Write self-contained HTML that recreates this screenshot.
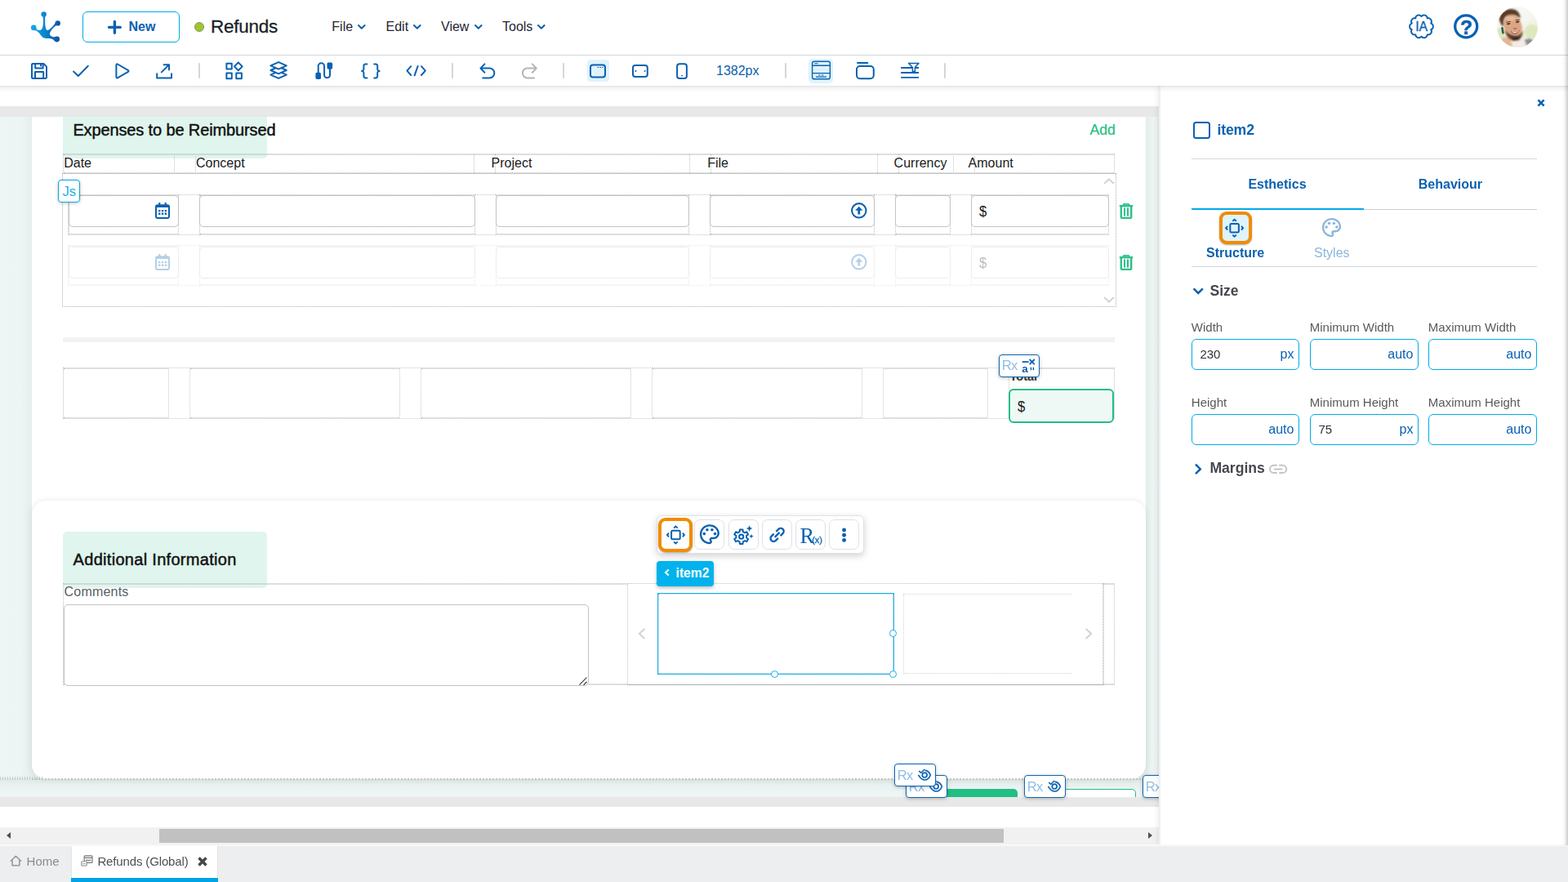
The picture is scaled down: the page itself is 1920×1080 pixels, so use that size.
<!DOCTYPE html>
<html lang="en">
<head>
<meta charset="utf-8">
<title>Refunds</title>
<style>
*{box-sizing:border-box;margin:0;padding:0}
html,body{width:1920px;height:1080px;overflow:hidden;background:#fff}
body{font-family:"Liberation Sans",sans-serif;font-size:16px;color:#222;position:relative}
.a{position:absolute}
.t{position:absolute;white-space:nowrap;line-height:1}
svg{position:absolute;overflow:visible}
.ic{fill:none;stroke:#0a61b1;stroke-width:2;stroke-linecap:round;stroke-linejoin:round}
.icg{fill:none;stroke:#b4b4b4;stroke-width:2;stroke-linecap:round;stroke-linejoin:round}
.fb{fill:#0a61b1}
#hdr{z-index:5;left:0;top:0;width:1920px;height:68px;background:#fff;border-bottom:1px solid #d3d6db}
#tb{z-index:4;left:0;top:68px;width:1920px;height:37px;background:#fff}
#tbs{z-index:4;left:0;top:105px;width:1920px;height:8px;background:linear-gradient(180deg,rgba(0,0,0,.105) 0,rgba(0,0,0,.06) 2px,rgba(0,0,0,.025) 4.5px,rgba(0,0,0,0) 8px)}
#top{z-index:6;left:0;top:0;width:1920px;height:106px}
.sep{position:absolute;top:77px;width:2px;height:19px;background:#d3d6db;border-radius:1px}
.hl{position:absolute;background:#dff3fb}
#ws{left:0;top:0;width:1419px;height:1035px;background:#fff;overflow:hidden}
.gbar{position:absolute;left:0;width:1420px;background:#e8e8e8}
#form{left:0;top:143px;width:1420px;height:833px;background:#eef6f5;overflow:hidden}
#form .card{margin-top:-143px}
.card{position:absolute;background:#fff}
.d{position:absolute;border:1px dotted #bbbec2}
.d2{position:absolute;border:1px dotted #c6c9cc}
.dh{position:absolute;height:0;border-top:1px dotted #bbbec2}
.dv{position:absolute;width:0;border-left:1px dotted #bfc2c6}
.inp{position:absolute;border:1px solid #c2c2c2;border-radius:5px;background:#fff}
.ttl{position:absolute;background:#dff5ed}
.rx{position:absolute;border:1px solid #0f66b4;border-radius:4px;background:#fff;box-shadow:0 1px 4px rgba(0,0,0,.25)}
.fbtn{position:absolute;width:37px;height:37px;border:1px solid #dfe1e4;border-radius:7px;background:#fff}
#pn{z-index:3;left:1419px;top:105px;width:501px;height:930px;background:#fff;border-left:2px solid #eff0f0;box-shadow:-2px 0 6px rgba(0,0,0,.07)}
.pin{position:absolute;border:1px solid #00a9e8;border-radius:6px;background:#fff;width:132px;height:38px}
#bt{z-index:7;left:0;top:1034px;width:1920px;height:46px;background:#edeef0;border-top:1px solid #dcdde0}
</style>
</head>
<body>
<div id="ws" class="a">
<div id="form" class="a">
<div class="a" style="left:0;top:0;width:1420px;height:833px;background:linear-gradient(90deg,#eef6f5 0,#edf5f4 26px,#e5eeed 38px,#e5eeed 1404px,#ecf4f3 1411px,#edf4f3 1416px,#e6eded 1419px)"></div>
<div class="a" style="left:0;top:810px;width:1420px;height:23px;background:linear-gradient(180deg,#dde8e7 0,#e8f1f0 8px,#eef6f5 18px)"></div>
<div class="card" style="left:39px;top:143px;width:1364px;height:490px"></div>
<div class="card" style="left:39px;top:613px;width:1364px;height:340.5px;border-radius:18px;box-shadow:0 0 9px rgba(0,0,0,.09)"></div>
</div>
<div class="gbar" style="top:130px;height:13px"></div>
<div class="a" style="left:77px;top:143px;width:250px;height:51px;background:#dff5ed;border-radius:0 0 5px 5px"></div>
<span class="t" style="top:149px;font-size:20px;color:#111;left:89.40px;letter-spacing:-0.13px;-webkit-text-stroke:.45px #111;">Expenses to be Reimbursed</span>
<span class="t" style="top:151px;font-size:17.6px;color:#21bf83;left:1334.40px;-webkit-text-stroke:.2px #21bf83;">Add</span>
<div class="d" style="left:77px;top:188px;width:1288px;height:25px;"></div>
<div class="dh" style="left:78px;top:189px;width:1286px"></div>
<div class="dh" style="left:78px;top:211px;width:1286px"></div>
<div class="dv" style="left:213px;top:189px;height:23px"></div>
<div class="dv" style="left:239px;top:189px;height:23px"></div>
<div class="dv" style="left:580px;top:189px;height:23px"></div>
<div class="dv" style="left:606px;top:189px;height:23px"></div>
<div class="dv" style="left:844px;top:189px;height:23px"></div>
<div class="dv" style="left:870px;top:189px;height:23px"></div>
<div class="dv" style="left:1074px;top:189px;height:23px"></div>
<div class="dv" style="left:1100px;top:189px;height:23px"></div>
<div class="dv" style="left:1167px;top:189px;height:23px"></div>
<div class="dv" style="left:1193px;top:189px;height:23px"></div>
<span class="t" style="top:192px;font-size:16px;color:#1a1a1a;left:78.20px;">Date</span>
<span class="t" style="top:192px;font-size:16px;color:#1a1a1a;left:240.00px;">Concept</span>
<span class="t" style="top:192px;font-size:16px;color:#1a1a1a;left:601.60px;">Project</span>
<span class="t" style="top:192px;font-size:16px;color:#1a1a1a;left:866.20px;">File</span>
<span class="t" style="top:192px;font-size:16px;color:#1a1a1a;left:1094.60px;">Currency</span>
<span class="t" style="top:192px;font-size:16px;color:#1a1a1a;left:1185.60px;">Amount</span>
<div class="a" style="left:76px;top:212px;width:1291px;height:164px;border:1px dotted #b0b0b0;border-top:1px solid #c4c4c4"></div>
<svg style="left:1351px;top:218px;" width="14" height="8" viewBox="0 0 14 8"><path d="M1 7L7 1.4L13 7" fill="none" stroke="#d4d4d4" stroke-width="2"/></svg>
<svg style="left:1351px;top:363px;" width="14" height="8" viewBox="0 0 14 8"><path d="M1 1L7 6.6L13 1" fill="none" stroke="#d4d4d4" stroke-width="2"/></svg>
<div class="a" style="left:0;top:0;width:1420px;height:1px;opacity:1">
<div class="d" style="left:84px;top:238px;width:135px;height:50px;"></div>
<div class="dh" style="left:85px;top:239px;width:133px"></div>
<div class="dh" style="left:85px;top:286px;width:133px"></div>
<div class="d" style="left:244px;top:238px;width:338px;height:50px;"></div>
<div class="dh" style="left:245px;top:239px;width:336px"></div>
<div class="dh" style="left:245px;top:286px;width:336px"></div>
<div class="d" style="left:607px;top:238px;width:237px;height:50px;"></div>
<div class="dh" style="left:608px;top:239px;width:235px"></div>
<div class="dh" style="left:608px;top:286px;width:235px"></div>
<div class="d" style="left:869px;top:238px;width:202px;height:50px;"></div>
<div class="dh" style="left:870px;top:239px;width:200px"></div>
<div class="dh" style="left:870px;top:286px;width:200px"></div>
<div class="d" style="left:1096px;top:238px;width:68px;height:50px;"></div>
<div class="dh" style="left:1097px;top:239px;width:66px"></div>
<div class="dh" style="left:1097px;top:286px;width:66px"></div>
<div class="d" style="left:1189px;top:238px;width:169px;height:50px;"></div>
<div class="dh" style="left:1190px;top:239px;width:167px"></div>
<div class="dh" style="left:1190px;top:286px;width:167px"></div>
<div class="dh" style="left:219px;top:238px;width:25px;border-color:#c4c4c4"></div>
<div class="dh" style="left:219px;top:287px;width:25px;border-color:#c4c4c4"></div>
<div class="dh" style="left:582px;top:238px;width:25px;border-color:#c4c4c4"></div>
<div class="dh" style="left:582px;top:287px;width:25px;border-color:#c4c4c4"></div>
<div class="dh" style="left:844px;top:238px;width:25px;border-color:#c4c4c4"></div>
<div class="dh" style="left:844px;top:287px;width:25px;border-color:#c4c4c4"></div>
<div class="dh" style="left:1071px;top:238px;width:25px;border-color:#c4c4c4"></div>
<div class="dh" style="left:1071px;top:287px;width:25px;border-color:#c4c4c4"></div>
<div class="dh" style="left:1164px;top:238px;width:25px;border-color:#c4c4c4"></div>
<div class="dh" style="left:1164px;top:287px;width:25px;border-color:#c4c4c4"></div>
<div class="dv" style="left:83px;top:238px;height:50px"></div>
<div class="inp" style="left:84px;top:239px;width:135px;height:39px"></div>
<div class="inp" style="left:244px;top:239px;width:338px;height:39px"></div>
<div class="inp" style="left:607px;top:239px;width:237px;height:39px"></div>
<div class="inp" style="left:869px;top:239px;width:202px;height:39px"></div>
<div class="inp" style="left:1096px;top:239px;width:68px;height:39px"></div>
<div class="inp" style="left:1189px;top:239px;width:169px;height:39px"></div>
<svg style="left:190px;top:248px;" width="18" height="20" viewBox="0 0 18 20"><rect x="1" y="3.3" width="16" height="15.7" rx="2.2" fill="none" stroke="#0a61b1" stroke-width="2"/><path d="M0.6 3.4h16.8v2.6H0.6Z" fill="#0a61b1"/><path d="M5.3 0V4M12.7 0V4" stroke="#0a61b1" stroke-width="2.1" stroke-linecap="butt"/><path d="M4.1 8.9h2.3v2.3H4.1zM7.9 8.9h2.3v2.3H7.9zM11.7 8.9h2.3v2.3h-2.3zM4.1 12.6h2.3v2.3H4.1zM7.9 12.6h2.3v2.3H7.9zM11.7 12.6h2.3v2.3h-2.3z" fill="#0a61b1"/></svg>
<svg style="left:1042.2px;top:248px;" width="20" height="20" viewBox="0 0 20 20"><circle cx="9.8" cy="9.8" r="8.7" fill="none" stroke="#0a61b1" stroke-width="2.1"/><path d="M9.8 4.8L14.4 9.8H11.2V14.4H8.4V9.8H5.2Z" fill="#0a61b1"/></svg>
<span class="t" style="top:250px;font-size:18.5px;color:#1a1a1a;left:1199.40px;transform:scaleX(.9);transform-origin:0 0;">$</span>
</div>
<svg style="left:1370px;top:249.0px;" width="18" height="19" viewBox="0 0 18 19"><path d="M0.8 3.2H17.2" stroke="#2fc08c" stroke-width="2.4" stroke-linecap="butt" fill="none"/><path d="M5.4 2.6V1.9a1 1 0 0 1 1-1H11.6a1 1 0 0 1 1 1V2.6" fill="none" stroke="#2fc08c" stroke-width="1.8"/><path d="M2.8 4V16.4a1.5 1.5 0 0 0 1.5 1.5H13.7a1.5 1.5 0 0 0 1.5-1.5V4" fill="none" stroke="#2fc08c" stroke-width="2.4"/><path d="M7 5.4V15.6M11 5.4V15.6" stroke="#2fc08c" stroke-width="2.1" fill="none"/></svg>
<div class="a" style="left:0;top:0;width:1420px;height:1px;opacity:0.3">
<div class="d" style="left:84px;top:300px;width:135px;height:50px;"></div>
<div class="dh" style="left:85px;top:301px;width:133px"></div>
<div class="dh" style="left:85px;top:348px;width:133px"></div>
<div class="d" style="left:244px;top:300px;width:338px;height:50px;"></div>
<div class="dh" style="left:245px;top:301px;width:336px"></div>
<div class="dh" style="left:245px;top:348px;width:336px"></div>
<div class="d" style="left:607px;top:300px;width:237px;height:50px;"></div>
<div class="dh" style="left:608px;top:301px;width:235px"></div>
<div class="dh" style="left:608px;top:348px;width:235px"></div>
<div class="d" style="left:869px;top:300px;width:202px;height:50px;"></div>
<div class="dh" style="left:870px;top:301px;width:200px"></div>
<div class="dh" style="left:870px;top:348px;width:200px"></div>
<div class="d" style="left:1096px;top:300px;width:68px;height:50px;"></div>
<div class="dh" style="left:1097px;top:301px;width:66px"></div>
<div class="dh" style="left:1097px;top:348px;width:66px"></div>
<div class="d" style="left:1189px;top:300px;width:169px;height:50px;"></div>
<div class="dh" style="left:1190px;top:301px;width:167px"></div>
<div class="dh" style="left:1190px;top:348px;width:167px"></div>
<div class="dh" style="left:219px;top:300px;width:25px;border-color:#c4c4c4"></div>
<div class="dh" style="left:219px;top:349px;width:25px;border-color:#c4c4c4"></div>
<div class="dh" style="left:582px;top:300px;width:25px;border-color:#c4c4c4"></div>
<div class="dh" style="left:582px;top:349px;width:25px;border-color:#c4c4c4"></div>
<div class="dh" style="left:844px;top:300px;width:25px;border-color:#c4c4c4"></div>
<div class="dh" style="left:844px;top:349px;width:25px;border-color:#c4c4c4"></div>
<div class="dh" style="left:1071px;top:300px;width:25px;border-color:#c4c4c4"></div>
<div class="dh" style="left:1071px;top:349px;width:25px;border-color:#c4c4c4"></div>
<div class="dh" style="left:1164px;top:300px;width:25px;border-color:#c4c4c4"></div>
<div class="dh" style="left:1164px;top:349px;width:25px;border-color:#c4c4c4"></div>
<div class="dv" style="left:83px;top:300px;height:50px"></div>
<div class="inp" style="left:84px;top:302px;width:135px;height:39px"></div>
<div class="inp" style="left:244px;top:302px;width:338px;height:39px"></div>
<div class="inp" style="left:607px;top:302px;width:237px;height:39px"></div>
<div class="inp" style="left:869px;top:302px;width:202px;height:39px"></div>
<div class="inp" style="left:1096px;top:302px;width:68px;height:39px"></div>
<div class="inp" style="left:1189px;top:302px;width:169px;height:39px"></div>
<svg style="left:190px;top:311px;" width="18" height="20" viewBox="0 0 18 20"><rect x="1" y="3.3" width="16" height="15.7" rx="2.2" fill="none" stroke="#0a61b1" stroke-width="2"/><path d="M0.6 3.4h16.8v2.6H0.6Z" fill="#0a61b1"/><path d="M5.3 0V4M12.7 0V4" stroke="#0a61b1" stroke-width="2.1" stroke-linecap="butt"/><path d="M4.1 8.9h2.3v2.3H4.1zM7.9 8.9h2.3v2.3H7.9zM11.7 8.9h2.3v2.3h-2.3zM4.1 12.6h2.3v2.3H4.1zM7.9 12.6h2.3v2.3H7.9zM11.7 12.6h2.3v2.3h-2.3z" fill="#0a61b1"/></svg>
<svg style="left:1042.2px;top:311px;" width="20" height="20" viewBox="0 0 20 20"><circle cx="9.8" cy="9.8" r="8.7" fill="none" stroke="#0a61b1" stroke-width="2.1"/><path d="M9.8 4.8L14.4 9.8H11.2V14.4H8.4V9.8H5.2Z" fill="#0a61b1"/></svg>
<span class="t" style="top:313px;font-size:18.5px;color:#1a1a1a;left:1199.40px;transform:scaleX(.9);transform-origin:0 0;">$</span>
</div>
<svg style="left:1370px;top:312.4px;" width="18" height="19" viewBox="0 0 18 19"><path d="M0.8 3.2H17.2" stroke="#2fc08c" stroke-width="2.4" stroke-linecap="butt" fill="none"/><path d="M5.4 2.6V1.9a1 1 0 0 1 1-1H11.6a1 1 0 0 1 1 1V2.6" fill="none" stroke="#2fc08c" stroke-width="1.8"/><path d="M2.8 4V16.4a1.5 1.5 0 0 0 1.5 1.5H13.7a1.5 1.5 0 0 0 1.5-1.5V4" fill="none" stroke="#2fc08c" stroke-width="2.4"/><path d="M7 5.4V15.6M11 5.4V15.6" stroke="#2fc08c" stroke-width="2.1" fill="none"/></svg>
<div class="a" style="left:71px;top:220px;width:27px;height:28px;border:1px solid #00a9e8;border-radius:4px;background:#fff;box-shadow:0 1px 4px rgba(0,0,0,.22)"><span class="t" style="left:4.6px;top:5.4px;font-size:16.5px;color:#1aaee9">Js</span></div>
<div class="a" style="left:77px;top:413px;width:1288px;height:6px;background:#f1f3f3"></div>
<div class="d" style="left:77px;top:450px;width:130px;height:63px;"></div>
<div class="dh" style="left:78px;top:451px;width:128px"></div>
<div class="dh" style="left:78px;top:511px;width:128px"></div>
<div class="d" style="left:232px;top:450px;width:258px;height:63px;"></div>
<div class="dh" style="left:233px;top:451px;width:256px"></div>
<div class="dh" style="left:233px;top:511px;width:256px"></div>
<div class="d" style="left:515px;top:450px;width:258px;height:63px;"></div>
<div class="dh" style="left:516px;top:451px;width:256px"></div>
<div class="dh" style="left:516px;top:511px;width:256px"></div>
<div class="d" style="left:798px;top:450px;width:258px;height:63px;"></div>
<div class="dh" style="left:799px;top:451px;width:256px"></div>
<div class="dh" style="left:799px;top:511px;width:256px"></div>
<div class="d" style="left:1081px;top:450px;width:129px;height:63px;"></div>
<div class="dh" style="left:1082px;top:451px;width:127px"></div>
<div class="dh" style="left:1082px;top:511px;width:127px"></div>
<div class="d" style="left:1235px;top:450px;width:130px;height:63px;"></div>
<div class="dh" style="left:1236px;top:451px;width:128px"></div>
<div class="dh" style="left:1236px;top:511px;width:128px"></div>
<div class="d2" style="left:206px;top:450px;width:27px;height:63px;"></div>
<div class="d2" style="left:489px;top:450px;width:27px;height:63px;"></div>
<div class="d2" style="left:772px;top:450px;width:27px;height:63px;"></div>
<div class="d2" style="left:1055px;top:450px;width:27px;height:63px;"></div>
<div class="d2" style="left:1209px;top:450px;width:27px;height:63px;"></div>
<span class="t" style="top:454px;font-size:14.5px;color:#3a3a3a;left:1236.60px;font-weight:700;">Total</span>
<div class="a" style="left:1235px;top:476px;width:129px;height:42px;border:2px solid #21bf83;border-radius:6px;background:#eef9f5"></div>
<span class="t" style="top:489px;font-size:18.5px;color:#1a1a1a;left:1246.40px;transform:scaleX(.9);transform-origin:0 0;">$</span>
<div class="rx" style="left:1223px;top:434px;width:50px;height:28px;z-index:2"><span class="t" style="left:4.4px;top:4px;font-size:16.5px;color:#8fbde3;letter-spacing:-0.6px;margin-left:-1.6px">Rx</span><svg style="left:27px;top:5.4px" width="18" height="17" viewBox="0 0 18 17"><path d="M0.7 3.1H8.6" stroke="#0a61b1" stroke-width="1.8" fill="none"/><path d="M9.6 0L15.8 6.2M15.8 0L9.6 6.2" stroke="#0a61b1" stroke-width="1.8" fill="none"/><text x="0.3" y="15.7" font-family="Liberation Sans,sans-serif" font-weight="700" font-size="13.5" fill="#0a61b1">a</text><path d="M11.4 9.8V13.3M14.4 9.8V13.3" stroke="#0a61b1" stroke-width="1.5" fill="none"/></svg></div>
<div class="a" style="left:77px;top:651px;width:250px;height:69px;background:#dff5ed;border-radius:5px"></div>
<span class="t" style="top:675px;font-size:20px;color:#111;left:89.60px;letter-spacing:0.3px;-webkit-text-stroke:.45px #111;">Additional Information</span>
<div class="d" style="left:77px;top:714px;width:692px;height:125px;"></div>
<div class="dh" style="left:78px;top:715px;width:690px"></div>
<div class="dh" style="left:78px;top:837px;width:690px"></div>
<div class="d" style="left:768px;top:714px;width:584px;height:125px;"></div>
<div class="d" style="left:1350px;top:714px;width:15px;height:125px;"></div>
<div class="dh" style="left:1351px;top:715px;width:13px"></div>
<div class="dh" style="left:1351px;top:837px;width:13px"></div>
<div class="dh" style="left:768px;top:838px;width:583px;border-color:#999"></div>
<span class="t" style="top:717px;font-size:16px;color:#5a5d64;left:78.60px;letter-spacing:0.2px;">Comments</span>
<div class="a" style="left:78px;top:740px;width:643px;height:100px;border:1px solid #c2c2c2;border-radius:5px;background:#fff"></div>
<svg style="left:708px;top:828px;" width="12" height="12" viewBox="0 0 12 12"><path d="M1.4 10.6L10.4 1.6M6.6 10.8L10.6 6.8" stroke="#444" stroke-width="1.3" fill="none"/></svg>
<svg style="left:781px;top:769px;" width="10" height="14" viewBox="0 0 10 14"><path d="M8.4 1L1.8 7L8.4 13" fill="none" stroke="#d2d2d2" stroke-width="2"/></svg>
<svg style="left:1328px;top:769px;" width="10" height="14" viewBox="0 0 10 14"><path d="M1.6 1L8.2 7L1.6 13" fill="none" stroke="#d2d2d2" stroke-width="2"/></svg>
<div class="a" style="left:1106px;top:727px;width:206px;height:98px;border:1px dotted #d4d4d4;border-right:none"></div>
<div class="a" style="left:805px;top:726px;width:290px;height:100px;border:1px solid #19b0ea"></div>
<div class="a" style="left:806px;top:727px;width:288px;height:98px;border:1px dotted #9fc4d8"></div>
<div class="a" style="left:1089.3px;top:771.1px;width:9px;height:9px;border:1px solid #19b0ea;border-radius:50%;background:#fff"></div>
<div class="a" style="left:944.3px;top:821.1px;width:9px;height:9px;border:1px solid #19b0ea;border-radius:50%;background:#fff"></div>
<div class="a" style="left:1089.3px;top:821.1px;width:9px;height:9px;border:1px solid #19b0ea;border-radius:50%;background:#fff"></div>
<div class="a" style="left:804px;top:687px;width:70px;height:31px;background:#00b3ec;border-radius:4px;box-shadow:0 2px 4px rgba(0,0,0,.25)"></div>
<svg style="left:813px;top:696px;" width="8" height="10" viewBox="0 0 8 10"><path d="M5.8 1.4L2 5L5.8 8.6" fill="none" stroke="#fff" stroke-width="2"/></svg>
<span class="t" style="top:694px;font-size:15.6px;color:#fff;left:827.60px;font-weight:700;">item2</span>
<div class="a" style="left:804px;top:631px;width:254px;height:47px;border:1px solid #e1e3e6;border-radius:6px;background:#fff;box-shadow:0 3px 8px rgba(0,0,0,.18)"></div>
<div class="fbtn" style="left:809px;top:636px"></div>
<div class="fbtn" style="left:850px;top:636px"></div>
<div class="fbtn" style="left:892px;top:636px"></div>
<div class="fbtn" style="left:933px;top:636px"></div>
<div class="fbtn" style="left:974px;top:636px"></div>
<div class="fbtn" style="left:1015px;top:636px"></div>
<div class="a" style="left:806px;top:634px;width:42px;height:42px;border:4px solid #f28c00;border-radius:9px;background:#fff;box-shadow:0 1px 2px rgba(0,0,0,.35)"></div>
<svg style="left:0px;top:0px;" width="1420" height="1035" viewBox="0 0 1420 1035"><g transform="translate(827.4,655)" fill="none" stroke="#0a61b1"><rect x="-5.3" y="-5.3" width="10.6" height="10.6" rx="1.5" stroke-width="2"/><path d="M-2.3 -8.4L0 -10.5L2.3 -8.4M-2.3 8.4L0 10.5L2.3 8.4M-8.4 -2.3L-10.5 0L-8.4 2.3M8.4 -2.3L10.5 0L8.4 2.3" stroke-width="1.9"/></g><g transform="translate(868.9,654.2) scale(1.2) translate(-12,-12)" fill="#0a61b1"><path d="M12 22C6.49 22 2 17.51 2 12S6.49 2 12 2s10 4.04 10 9c0 3.31-2.69 6-6 6h-1.77c-.28 0-.5.22-.5.5 0 .12.05.23.13.33.41.47.64 1.06.64 1.67 0 1.38-1.12 2.5-2.5 2.5zm0-18c-4.41 0-8 3.59-8 8s3.59 8 8 8c.28 0 .5-.22.5-.5 0-.16-.08-.28-.14-.35-.41-.46-.63-1.05-.63-1.65 0-1.38 1.12-2.5 2.5-2.5H16c2.21 0 4-1.79 4-4 0-3.86-3.59-7-8-7z"/><circle cx="6.5" cy="11.5" r="1.5"/><circle cx="9.5" cy="7.5" r="1.5"/><circle cx="14.5" cy="7.5" r="1.5"/><circle cx="17.5" cy="11.5" r="1.5"/></g><path d="M909.77 663.36L909.55 665.91L905.85 665.91L905.63 663.36L903.40 662.08L901.09 663.16L899.24 659.95L901.33 658.48L901.33 655.92L899.24 654.45L901.09 651.24L903.40 652.32L905.63 651.04L905.85 648.49L909.55 648.49L909.77 651.04L912.00 652.32L914.31 651.24L916.16 654.45L914.07 655.92L914.07 658.48L916.16 659.95L914.31 663.16L912.00 662.08Z" fill="none" stroke="#0a61b1" stroke-width="2" stroke-linejoin="round"/><circle cx="907.7" cy="657.2" r="2.6" fill="none" stroke="#0a61b1" stroke-width="2"/><path d="M917.6 643.3000000000001L918.74 645.96L921.4 647.1L918.74 648.24L917.6 650.9L916.46 648.24L913.8000000000001 647.1L916.46 645.96Z" fill="#0a61b1"/><path d="M920.0 653.9L920.81 655.79L922.7 656.6L920.81 657.41L920.0 659.3000000000001L919.19 657.41L917.3 656.6L919.19 655.79Z" fill="#0a61b1"/><g transform="translate(951.6,654.9) rotate(-45)"><path d="M-1.9 -3.7H-6.2a3.7 3.7 0 0 0 0 7.4H-1.9M1.9 -3.7H6.2a3.7 3.7 0 0 1 0 7.4H1.9M-4.2 0H4.2" fill="none" stroke="#0a61b1" stroke-width="2.3" stroke-linecap="butt"/></g><text x="979.4" y="665" font-family="Liberation Serif,serif" font-size="26.5" fill="#0a61b1">R</text><text x="994.2" y="664.6" font-family="Liberation Sans,sans-serif" font-size="11" fill="#0a61b1" stroke="#0a61b1" stroke-width=".3">(x)</text><circle cx="1033.6" cy="649.0" r="2.45" fill="#0a61b1"/><circle cx="1033.6" cy="655.2" r="2.45" fill="#0a61b1"/><circle cx="1033.6" cy="661.4000000000001" r="2.45" fill="#0a61b1"/></svg>
<div class="a" style="left:39px;top:953px;width:1364px;height:2px;background:repeating-linear-gradient(90deg,#c2c5c5 0 2px,transparent 2px 4px)"></div>
<div class="a" style="left:0;top:951px;width:52px;height:4px;background:repeating-linear-gradient(90deg,#c4c8c8 0 1px,transparent 1px 3px)"></div>
<div class="a" style="left:1150px;top:966px;width:96px;height:20px;background:#21bf83;border-radius:0 5px 0 0"></div>
<div class="a" style="left:1300px;top:966px;width:91px;height:20px;background:#fff;border:1px solid #21bf83;border-radius:0 5px 0 0"></div>
<div class="gbar" style="top:976px;height:12px"></div>
<div class="a" style="left:0px;top:988px;width:1420px;height:25px;background:#fff"></div>
<div class="rx" style="left:1109px;top:949px;width:51px;height:28px;z-index:2"><span class="t" style="left:4.4px;top:5px;font-size:16.5px;color:#8fbde3;letter-spacing:-0.6px;margin-left:-1.6px">Rx</span><svg style="left:27.6px;top:5.4px;" width="18" height="16" viewBox="0 0 18 16"><path d="M0.8 8.4C3.2 12.4 6 14 8.6 14C11.4 14 13.8 12 15.4 8C13.8 4.6 11.6 2.7 9.2 2.4" fill="none" stroke="#0b63b3" stroke-width="1.7" stroke-linecap="round"/><circle cx="8.2" cy="8.1" r="2.9" fill="none" stroke="#0b63b3" stroke-width="1.7"/><path d="M1.6 3.4L3.7 5.3L7.9 1.2" fill="none" stroke="#0b63b3" stroke-width="1.5" stroke-linecap="round"/></svg>
</div>
<div class="rx" style="left:1095px;top:935px;width:51px;height:28px;z-index:3"><span class="t" style="left:4.4px;top:5px;font-size:16.5px;color:#8fbde3;letter-spacing:-0.6px;margin-left:-1.6px">Rx</span><svg style="left:27.6px;top:5.4px;" width="18" height="16" viewBox="0 0 18 16"><path d="M0.8 8.4C3.2 12.4 6 14 8.6 14C11.4 14 13.8 12 15.4 8C13.8 4.6 11.6 2.7 9.2 2.4" fill="none" stroke="#0b63b3" stroke-width="1.7" stroke-linecap="round"/><circle cx="8.2" cy="8.1" r="2.9" fill="none" stroke="#0b63b3" stroke-width="1.7"/><path d="M1.6 3.4L3.7 5.3L7.9 1.2" fill="none" stroke="#0b63b3" stroke-width="1.5" stroke-linecap="round"/></svg>
</div>
<div class="rx" style="left:1254px;top:949px;width:51px;height:28px;z-index:2"><span class="t" style="left:4.4px;top:5px;font-size:16.5px;color:#8fbde3;letter-spacing:-0.6px;margin-left:-1.6px">Rx</span><svg style="left:27.6px;top:5.4px;" width="18" height="16" viewBox="0 0 18 16"><path d="M0.8 8.4C3.2 12.4 6 14 8.6 14C11.4 14 13.8 12 15.4 8C13.8 4.6 11.6 2.7 9.2 2.4" fill="none" stroke="#0b63b3" stroke-width="1.7" stroke-linecap="round"/><circle cx="8.2" cy="8.1" r="2.9" fill="none" stroke="#0b63b3" stroke-width="1.7"/><path d="M1.6 3.4L3.7 5.3L7.9 1.2" fill="none" stroke="#0b63b3" stroke-width="1.5" stroke-linecap="round"/></svg>
</div>
<div class="rx" style="left:1399px;top:949px;width:51px;height:28px;z-index:2"><span class="t" style="left:4.4px;top:5px;font-size:16.5px;color:#8fbde3;letter-spacing:-0.6px;margin-left:-1.6px">Rx</span></div>
<div class="a" style="left:0px;top:1013px;width:1420px;height:22px;background:#f1f1f1"></div>
<div class="a" style="left:195px;top:1015px;width:1034px;height:17px;background:#c1c1c1"></div>
<div class="a" style="left:8px;top:1018.6px;width:0px;height:0px;border-top:4.8px solid transparent;border-bottom:4.8px solid transparent;border-right:5.6px solid #505050"></div>
<div class="a" style="left:1406px;top:1018.6px;width:0px;height:0px;border-top:4.8px solid transparent;border-bottom:4.8px solid transparent;border-left:5.6px solid #505050"></div>
</div>
<div id="hdr" class="a"></div>
<div id="tb" class="a"></div>
<div id="tbs" class="a"></div>
<div id="top" class="a">
<svg style="left:38px;top:14px;" width="36" height="38" viewBox="0 0 36 38"><defs><linearGradient id="lg" gradientUnits="userSpaceOnUse" x1="0" y1="0" x2="36" y2="0"><stop offset="0" stop-color="#17aaea"/><stop offset="0.42" stop-color="#0b8ad2"/><stop offset="0.7" stop-color="#0a6ebd"/><stop offset="1" stop-color="#0b50a0"/></linearGradient></defs>
<g fill="url(#lg)">
<path d="M14.6 5.6C15.1 11.5 15.4 17.6 13.4 21.2C12.2 23.4 8.6 23.6 6.6 21.4L5.4 18.2L3.6 22.9C7.6 23 9.8 26 12 29.2C14 32 16 33 19 33C23.6 33 26.4 33.2 28.6 36L31 31.2C27.4 31.8 23.6 30.4 23 28.2C22.6 25.2 26.6 20.2 30.6 17.2L30.8 12.6C28.4 17 22.6 23 20.2 23.2C17.4 23.3 16.8 14.6 17.4 5.6Z"/>
<circle cx="15.6" cy="3.4" r="3.2"/>
<circle cx="32.7" cy="14.4" r="3.2"/>
<circle cx="3.2" cy="19.9" r="3.3"/>
<circle cx="31.6" cy="34" r="3.4"/>
</g></svg>
<div class="a" style="left:101px;top:14px;width:119px;height:38px;border:1px solid #00a9e8;border-radius:6px;background:#fff"></div>
<svg style="left:132px;top:25px;" width="17" height="17" viewBox="0 0 17 17"><path d="M8.4 1.5V15.3M1.5 8.4H15.3" stroke="#0a61b1" stroke-width="3.4" stroke-linecap="round" fill="none"/></svg>
<span class="t" style="top:25px;font-size:16px;color:#0a61b1;left:157.50px;font-weight:700;">New</span>
<div class="a" style="left:238px;top:27px;width:12px;height:12px;border-radius:50%;background:#a0c52f;border:1px solid #86985e"></div>
<span class="t" style="top:22px;font-size:22.5px;color:#1b1f2a;left:258.00px;letter-spacing:-0.25px;-webkit-text-stroke:.3px #1b1f2a;">Refunds</span>
<span class="t" style="top:25px;font-size:16px;color:#1f2433;left:406.30px;">File</span>
<svg style="left:437.5px;top:29px;" width="10" height="8" viewBox="0 0 10 8"><path d="M1 2L4.8 5.8L8.6 2" class="ic" stroke-width="1.9"/></svg>
<span class="t" style="top:25px;font-size:16px;color:#1f2433;left:472.50px;">Edit</span>
<svg style="left:505.8px;top:29px;" width="10" height="8" viewBox="0 0 10 8"><path d="M1 2L4.8 5.8L8.6 2" class="ic" stroke-width="1.9"/></svg>
<span class="t" style="top:25px;font-size:16px;color:#1f2433;left:540.00px;">View</span>
<svg style="left:580.5px;top:29px;" width="10" height="8" viewBox="0 0 10 8"><path d="M1 2L4.8 5.8L8.6 2" class="ic" stroke-width="1.9"/></svg>
<span class="t" style="top:25px;font-size:16px;color:#1f2433;left:615.00px;">Tools</span>
<svg style="left:658.3px;top:29px;" width="10" height="8" viewBox="0 0 10 8"><path d="M1 2L4.8 5.8L8.6 2" class="ic" stroke-width="1.9"/></svg>
<svg style="left:1725px;top:17px;" width="31" height="31" viewBox="0 0 31 31"><path d="M15.50 3.10A4.03 4.03 0 0 1 22.73 5.45A4.03 4.03 0 0 1 27.20 11.60A4.03 4.03 0 0 1 27.20 19.20A4.03 4.03 0 0 1 22.73 25.35A4.03 4.03 0 0 1 15.50 27.70A4.03 4.03 0 0 1 8.27 25.35A4.03 4.03 0 0 1 3.80 19.20A4.03 4.03 0 0 1 3.80 11.60A4.03 4.03 0 0 1 8.27 5.45A4.03 4.03 0 0 1 15.50 3.10Z" fill="none" stroke="#0a61b1" stroke-width="1.9" stroke-linejoin="round"/><text x="15.6" y="20.7" text-anchor="middle" font-family="Liberation Sans,sans-serif" font-size="15.8" fill="#0a61b1" stroke="#0a61b1" stroke-width=".3">IA</text></svg>
<svg style="left:1779.7px;top:17.3px;" width="31" height="31" viewBox="0 0 31 31"><circle cx="15.2" cy="15.3" r="13.5" fill="none" stroke="#0a61b1" stroke-width="3.3"/><text x="15.5" y="24.7" text-anchor="middle" font-family="Liberation Sans,sans-serif" font-weight="700" font-size="24.5" fill="#0a61b1" stroke="#0a61b1" stroke-width=".5">?</text></svg>
<svg style="left:1833.2px;top:7.8px;" width="50" height="50" viewBox="0 0 50 50"><defs><clipPath id="avc"><circle cx="25" cy="25" r="24.9"/></clipPath>
<linearGradient id="avbg" x1="0" y1="0" x2="0.6" y2="1"><stop offset="0" stop-color="#fbfbfa"/><stop offset="0.55" stop-color="#f5f6f1"/><stop offset="1" stop-color="#e6edd0"/></linearGradient>
<filter id="avb" x="-30%" y="-30%" width="160%" height="160%"><feGaussianBlur stdDeviation="1.1"/></filter>
<filter id="avb2" x="-30%" y="-30%" width="160%" height="160%"><feGaussianBlur stdDeviation="0.55"/></filter></defs>
<g clip-path="url(#avc)"><rect width="50" height="50" fill="url(#avbg)"/>
<g filter="url(#avb)">
<ellipse cx="43" cy="31" rx="9" ry="9" fill="#dde8bd"/>
<ellipse cx="3.5" cy="34" rx="6" ry="8" fill="#dbe6bc"/>
<path d="M33 41L40 39L47 43L44 52L30 52Z" fill="#8b8e97"/>
<path d="M20 50L24 41L33 40L36 46L33 52Z" fill="#f3ebe8"/>
<path d="M5 41C7 37 12 36 17 39L19 51L7 51Z" fill="#e6b595"/>
<ellipse cx="19.5" cy="25" rx="11" ry="15.5" fill="#dba684" transform="rotate(-12 19.5 25)"/>
<ellipse cx="17" cy="14.5" rx="6" ry="3" fill="#e8bb9c"/>
<path d="M2.7 16C3 9 8 4 16 3C23 2.4 27.5 6 29 14L26 13C23 9.5 18 9.5 13 11C9 12.5 7.5 17 8 24L5.5 23Z" fill="#5a3a24"/>
<path d="M9.5 29C11 36 15 41.5 22 42C28 42 31.5 37 32 29.5C30 33 27.5 35 24.5 35.5C20 36 13 33 9.5 29Z" fill="#5d3d29"/>
<ellipse cx="23" cy="39.6" rx="5.5" ry="2.5" fill="#3f2a1d"/>
</g>
<g filter="url(#avb2)">
<path d="M16.5 29.5C20 31.5 24.5 31 28 28.5C27 32.5 23.5 34.5 20.5 33.5C18.5 33 17 31.5 16.5 29.5Z" fill="#b06a58"/>
<path d="M18 30.3C21 31.6 24.5 31.2 27 29.6C25.5 31.8 22.5 32.6 20 32Z" fill="#f4e6df"/>
<ellipse cx="22.2" cy="27" rx="2.6" ry="1.1" fill="#b27759"/>
<ellipse cx="14.2" cy="21.2" rx="2.3" ry="1" fill="#4a2f22" transform="rotate(-10 14.2 21.2)"/>
<ellipse cx="25.3" cy="18.8" rx="2.3" ry="1" fill="#4a2f22" transform="rotate(-10 25.3 18.8)"/>
<path d="M11 19.3L17 18.3M22.5 16.8L28.5 16" stroke="#6a4630" stroke-width="1" fill="none"/>
<rect x="5.6" y="25" width="2.6" height="8.5" rx="1" fill="#2f5d50" transform="rotate(-10 7 29)"/>
</g></g></svg>
</div>
<div id="tbi" class="a" style="z-index:6;left:0;top:0;width:1920px;height:106px">
<div class="a" style="left:719px;top:73px;width:27px;height:27px;background:#dff3fb;border-radius:4px"></div>
<div class="a" style="left:990px;top:72px;width:30px;height:30px;background:#dff3fb;border-radius:5px"></div>
<div class="sep" style="left:243px"></div>
<div class="sep" style="left:553px"></div>
<div class="sep" style="left:689px"></div>
<div class="sep" style="left:961px"></div>
<div class="sep" style="left:1156px"></div>
<svg style="left:0px;top:0px;" width="1920" height="106" viewBox="0 0 1920 106"><path class="ic" d="M39 79.2a1.2 1.2 0 0 1 1.2-1.2H53.4L57 81.6V94.8a1.2 1.2 0 0 1-1.2 1.2H40.2A1.2 1.2 0 0 1 39 94.8Z"/><path class="ic" d="M43.2 78.2V83.6H52.6V78.2M50 78.4V80.6"/><path class="ic" d="M43 96V88H53.2V96"/><path class="ic" d="M90 87.6L95.8 93L107.8 80.8"/><path class="ic" d="M142.4 79.4a1 1 0 0 1 1.5-.9L157 86.2a1 1 0 0 1 0 1.7L143.9 95.3a1 1 0 0 1-1.5-.9Z"/><path class="ic" d="M192.2 90.2V95.6H210V90.2M197.8 88.4L206.6 79.6M200.6 79.2H207V85.6"/><path class="ic" stroke-linejoin="miter" stroke-width="2.2" d="M277.4 77.8H283.8V84.6H277.4ZM277.4 89.5H283.8V96.3H277.4ZM289.3 89.5H295.9V96.3H289.3ZM291.8 76.5L296.7 81.4L291.8 86.3L286.9 81.4Z"/><path class="ic" stroke-linejoin="miter" stroke-linecap="butt" d="M341.1 76.1L350.8 80.4L341.1 84.7L331.4 80.4ZM337 83.5L331.4 86L341.1 90.3L350.8 86L345.2 83.5M337 89.1L331.4 91.6L341.1 95.9L350.8 91.6L345.2 89.1" stroke-width="2.2"/><path class="ic" d="M389.7 89V81a3.7 3.7 0 0 1 7.4 0V91.9a3.45 3.45 0 0 0 6.9 0V84.5" stroke-width="2.2"/><rect class="fb" x="386.4" y="88.7" width="6.6" height="8.3" rx="1.7"/><rect class="fb" x="400.5" y="76.5" width="6.6" height="8.3" rx="1.7"/><path class="ic" d="M449.4 78.4H447.6A2.2 2.2 0 0 0 445.4 80.6V84.4A2.4 2.4 0 0 1 443 86.9A2.4 2.4 0 0 1 445.4 89.4V93.2A2.2 2.2 0 0 0 447.6 95.4H449.4M458.2 78.4H460A2.2 2.2 0 0 1 462.2 80.6V84.4A2.4 2.4 0 0 0 464.6 86.9A2.4 2.4 0 0 0 462.2 89.4V93.2A2.2 2.2 0 0 1 460 95.4H458.2" stroke-width="2.4"/><path class="ic" d="M503.2 81.2L498.4 86.6L503.2 92M516 81.2L520.8 86.6L516 92M511.6 81L507.6 92.4" stroke-width="2.25"/><path class="ic" d="M593.4 78.4L588.4 83.6L593.4 88.8M588.8 83.6H599.4a5.9 5.9 0 0 1 0 11.8H591.2"/><path class="icg" d="M651.8 78.4L656.8 83.6L651.8 88.8M656.4 83.6H645.8a5.9 5.9 0 0 0 0 11.8H654"/><rect class="ic" x="723" y="79.4" width="18" height="15.2" rx="3"/><path d="M731.6 82.5h1.6M734.4 82.5h1.6M737.2 82.5h1.4" stroke="#0a61b1" stroke-width="1.2" fill="none"/><rect class="ic" x="775" y="80" width="17.8" height="14" rx="3"/><circle class="fb" cx="778.4" cy="87" r="1"/><circle class="fb" cx="789.6" cy="87" r="1"/><rect class="ic" x="829.1" y="78.2" width="11.8" height="17.8" rx="3"/><path d="M834.2 92.6h1.8" stroke="#0a61b1" stroke-width="1.2" fill="none"/><rect x="994.6" y="75.2" width="21.8" height="21.6" rx="2.4" fill="none" stroke="#0a61b1" stroke-width="1.4"/><path d="M994.6 80.2H1016.4M994.6 89.6H1016.4" stroke="#0a61b1" stroke-width="1.4" fill="none"/><path d="M997.2 77.7h4.6M999 94.1h13" stroke="#0a61b1" stroke-width="1.1" fill="none"/><path d="M1002.2 92h2.4M1006 92h2.4" stroke="#0a61b1" stroke-width="1" fill="none"/><rect class="ic" x="1049" y="81" width="20.8" height="15.2" rx="4"/><path class="ic" d="M1050 77H1062.4" stroke-linecap="butt" stroke-width="1.8"/><path d="M1103.2 83H1125M1103.2 89H1125M1103.2 94.8H1125" stroke="#0a61b1" stroke-width="1.8" fill="none"/><path d="M1112.6 77.4H1125L1120.4 82.4V87.6H1117.4V82.4Z" fill="#fff" stroke="#0a61b1" stroke-width="1.5" stroke-linejoin="round"/></svg>
<span class="t" style="top:79px;font-size:16px;color:#0a61b1;left:877.00px;">1382px</span>
</div>
<div id="pn" class="a"></div>
<div class="a" style="z-index:8;left:0;top:0;width:1920px;height:1035px;pointer-events:none">
<svg style="left:1882px;top:121px;" width="10" height="10" viewBox="0 0 10 10"><path d="M1.4 1.4L8.6 8.6M8.6 1.4L1.4 8.6" stroke="#0a61b1" stroke-width="2.6" fill="none"/></svg>
<div class="a" style="left:1460.6px;top:148.6px;width:21.6px;height:21.6px;border:2.5px solid #0a61b1;border-radius:3.5px"></div>
<span class="t" style="top:151px;font-size:17.6px;color:#0a61b1;left:1490.40px;font-weight:700;letter-spacing:-0.1px;">item2</span>
<div class="a" style="left:1459px;top:194px;width:423px;height:1px;background:#d3d6db"></div>
<span class="t" style="top:218px;font-size:16px;color:#0a61b1;left:1528.40px;font-weight:700;">Esthetics</span>
<span class="t" style="top:218px;font-size:16px;color:#0a61b1;left:1736.80px;font-weight:700;">Behaviour</span>
<div class="a" style="left:1670px;top:256px;width:212px;height:1px;background:#c9ccd0"></div>
<div class="a" style="left:1459px;top:255px;width:211px;height:2.4px;background:#00a9e8"></div>
<div class="a" style="left:1493px;top:259.2px;width:39.8px;height:39.8px;border:4px solid #f08c04;border-radius:9px;background:#dff3fb;box-shadow:0 1px 2px rgba(0,0,0,.35)"></div>
<svg style="left:0px;top:0px;" width="1920" height="1035" viewBox="0 0 1920 1035"><g transform="translate(1511.6,279.2)" fill="none" stroke="#0a61b1"><rect x="-5.3" y="-5.3" width="10.6" height="10.6" rx="1.5" stroke-width="2"/><path d="M-2.3 -8.4L0 -10.5L2.3 -8.4M-2.3 8.4L0 10.5L2.3 8.4M-8.4 -2.3L-10.5 0L-8.4 2.3M8.4 -2.3L10.5 0L8.4 2.3" stroke-width="1.9"/></g><g transform="translate(1630.5,278.6) scale(1.16) translate(-12,-12)" fill="#8bb6dc"><path d="M12 22C6.49 22 2 17.51 2 12S6.49 2 12 2s10 4.04 10 9c0 3.31-2.69 6-6 6h-1.77c-.28 0-.5.22-.5.5 0 .12.05.23.13.33.41.47.64 1.06.64 1.67 0 1.38-1.12 2.5-2.5 2.5zm0-18c-4.41 0-8 3.59-8 8s3.59 8 8 8c.28 0 .5-.22.5-.5 0-.16-.08-.28-.14-.35-.41-.46-.63-1.05-.63-1.65 0-1.38 1.12-2.5 2.5-2.5H16c2.21 0 4-1.79 4-4 0-3.86-3.59-7-8-7z"/><circle cx="6.5" cy="11.5" r="1.5"/><circle cx="9.5" cy="7.5" r="1.5"/><circle cx="14.5" cy="7.5" r="1.5"/><circle cx="17.5" cy="11.5" r="1.5"/></g><path d="M1461.6 353.4L1467.2 359L1472.8 353.4" fill="none" stroke="#0a61b1" stroke-width="2.5"/><path d="M1464 568.6L1469.8 574.4L1464 580.2" fill="none" stroke="#0a61b1" stroke-width="2.5"/><path d="M1563 569.8H1559.6a4.6 4.6 0 0 0 0 9.2H1563M1567 569.8H1570.6a4.6 4.6 0 0 1 0 9.2H1567M1560.6 574.4H1569.6" fill="none" stroke="#c3c5c8" stroke-width="2" stroke-linecap="round"/></svg>
<span class="t" style="top:302px;font-size:16px;color:#0a61b1;left:1477.00px;font-weight:700;">Structure</span>
<span class="t" style="top:302px;font-size:16px;color:#8bb6dc;left:1609.00px;">Styles</span>
<div class="a" style="left:1459px;top:326px;width:423px;height:1px;background:#d3d6db"></div>
<span class="t" style="top:348px;font-size:17.6px;color:#46484e;left:1481.40px;font-weight:700;">Size</span>
<span class="t" style="top:393px;font-size:15px;color:#5a5a5a;left:1458.80px;">Width</span>
<div class="pin" style="left:1459px;top:415px;width:132px"></div>
<span class="t" style="top:426px;font-size:15px;color:#2f2f3a;left:1469.40px;">230</span>
<span class="t" style="top:426px;font-size:16px;color:#0a61b1;right:335.60px;">px</span>
<span class="t" style="top:393px;font-size:15px;color:#5a5a5a;left:1603.80px;">Minimum Width</span>
<div class="pin" style="left:1604px;top:415px;width:133px"></div>
<span class="t" style="top:426px;font-size:16px;color:#0a61b1;right:189.60px;">auto</span>
<span class="t" style="top:393px;font-size:15px;color:#5a5a5a;left:1748.80px;">Maximum Width</span>
<div class="pin" style="left:1749px;top:415px;width:133px"></div>
<span class="t" style="top:426px;font-size:16px;color:#0a61b1;right:44.60px;">auto</span>
<span class="t" style="top:485px;font-size:15px;color:#5a5a5a;left:1458.80px;">Height</span>
<div class="pin" style="left:1459px;top:507px;width:132px"></div>
<span class="t" style="top:518px;font-size:16px;color:#0a61b1;right:335.60px;">auto</span>
<span class="t" style="top:485px;font-size:15px;color:#5a5a5a;left:1603.80px;">Minimum Height</span>
<div class="pin" style="left:1604px;top:507px;width:133px"></div>
<span class="t" style="top:518px;font-size:15px;color:#2f2f3a;left:1614.40px;">75</span>
<span class="t" style="top:518px;font-size:16px;color:#0a61b1;right:189.60px;">px</span>
<span class="t" style="top:485px;font-size:15px;color:#5a5a5a;left:1748.80px;">Maximum Height</span>
<div class="pin" style="left:1749px;top:507px;width:133px"></div>
<span class="t" style="top:518px;font-size:16px;color:#0a61b1;right:44.60px;">auto</span>
<span class="t" style="top:565px;font-size:17.6px;color:#46484e;left:1481.40px;font-weight:700;">Margins</span>
<div class="a" style="left:1913px;top:0px;width:7px;height:1035px;background:linear-gradient(90deg,rgba(0,0,0,0),rgba(0,0,0,.04) 40%,rgba(0,0,0,.2))"></div>
</div>
<div class="a" style="z-index:7;left:0;top:1034px;width:1920px;height:46px;background:#edeef0"></div>
<div class="a" style="z-index:7;left:0;top:1034px;width:1920px;height:2px;background:#f8f8f9"></div>
<div class="a" style="z-index:8;left:0;top:1034px;width:1920px;height:46px">
<div class="a" style="left:87px;top:2px;width:180px;height:44px;background:#fff;border-left:1px solid #e4e5e7;border-right:1px solid #e0e1e3"></div>
<div class="a" style="left:87px;top:41.2px;width:180px;height:4.8px;background:#00a3e4"></div>
<svg style="left:12px;top:13px;" width="15" height="14" viewBox="0 0 15 14"><path d="M1.2 7.2L7.4 1.2L13.6 7.2M3 6.2V12.8H11.8V6.2" fill="none" stroke="#969696" stroke-width="1.5" stroke-linejoin="round" stroke-linecap="round"/></svg>
<span class="t" style="left:32.6px;top:13px;font-size:15px;color:#8c8c8c">Home</span>
<svg style="left:99px;top:13px;" width="15" height="14" viewBox="0 0 15 14"><rect x="4.2" y="0.8" width="9.8" height="8.6" rx="1" fill="#fff" stroke="#777" stroke-width="1.2"/><path d="M4.2 3.4H14M6 6.4H12.4" stroke="#777" stroke-width="1.1" fill="none"/><rect x="0.8" y="7.8" width="6.4" height="5.2" rx="1" fill="#fff" stroke="#8a8a8a" stroke-width="1.1"/><path d="M2.4 10.6H5.6" stroke="#999" stroke-width="1" fill="none"/></svg>
<span class="t" style="left:119.4px;top:13px;font-size:15px;color:#4e4e55;letter-spacing:-0.14px">Refunds (Global)</span>
<svg style="left:242px;top:15.2px;" width="12" height="12" viewBox="0 0 12 12"><path d="M1.5 1.5L10.5 10.5M10.5 1.5L1.5 10.5" stroke="#464646" stroke-width="3.4" fill="none"/></svg>
</div>
</body>
</html>
